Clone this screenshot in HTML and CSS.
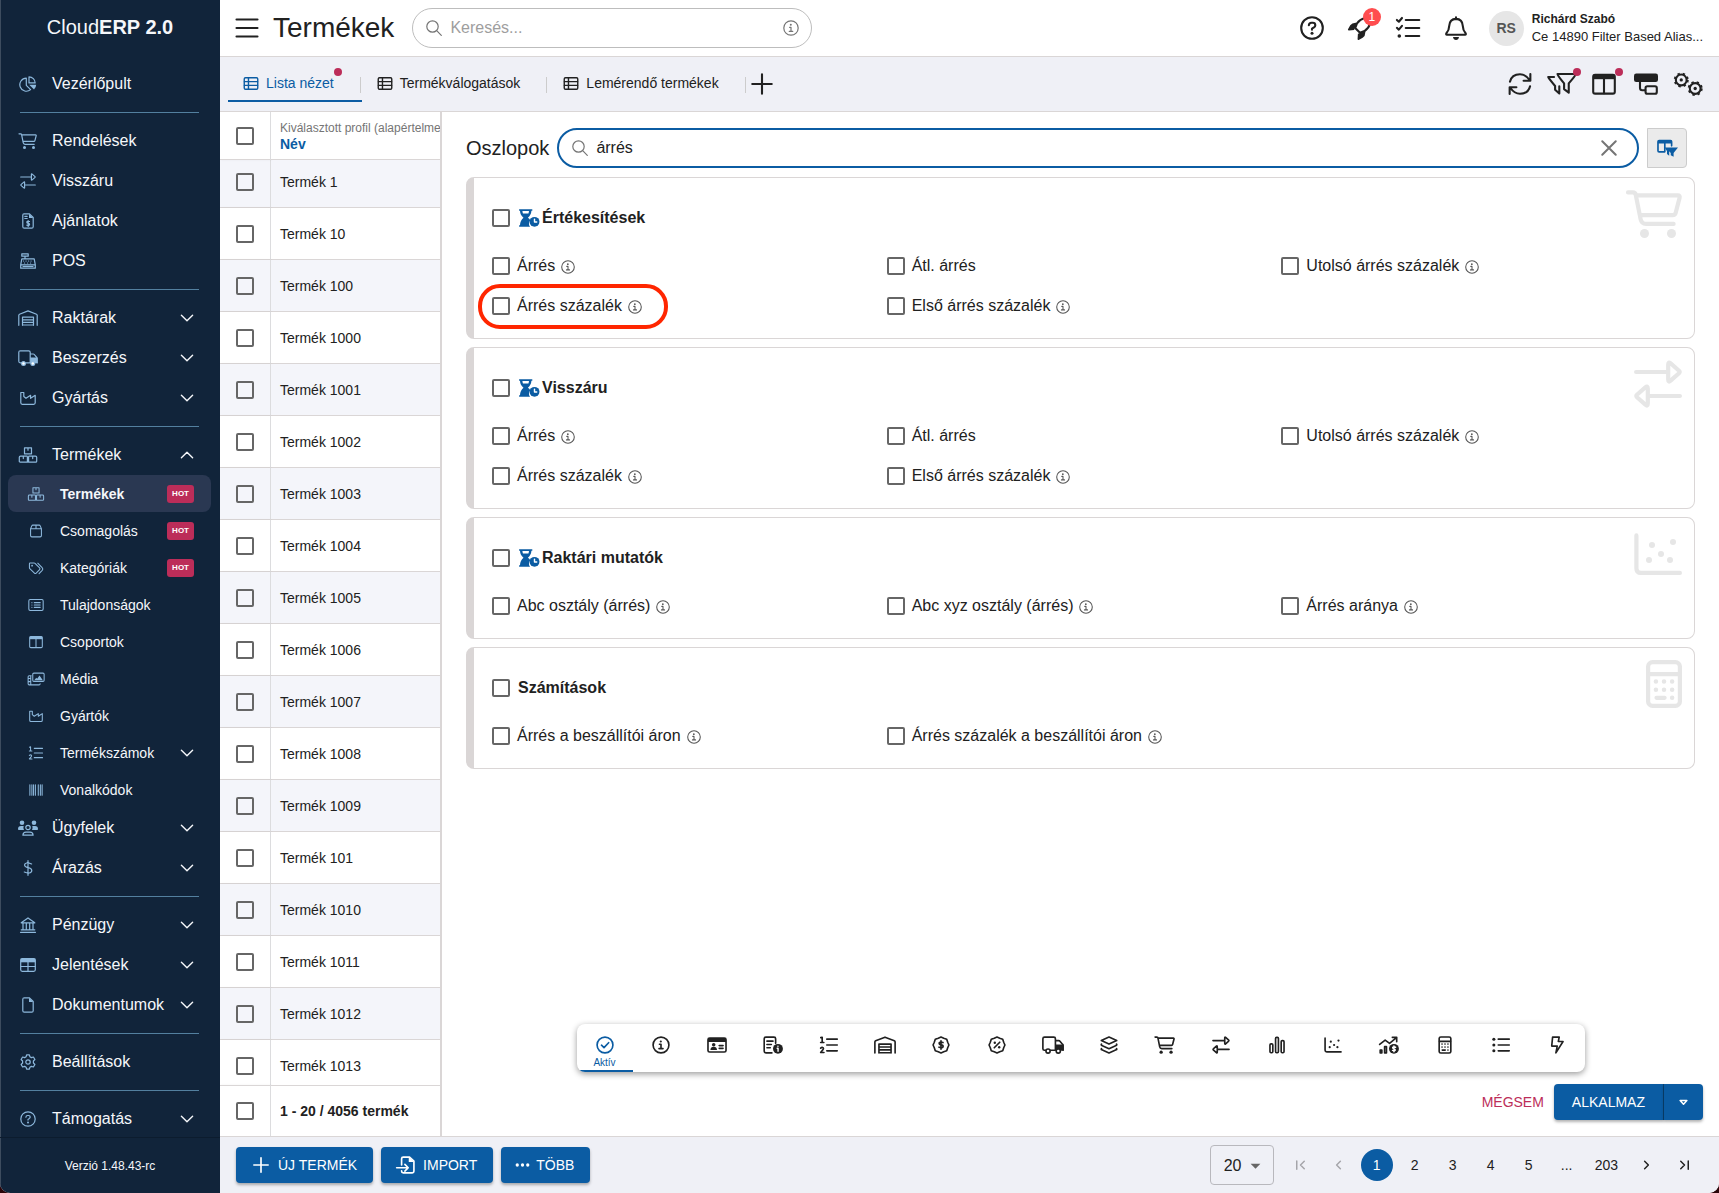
FILE: index.html
```html
<!DOCTYPE html>
<html lang="hu">
<head>
<meta charset="UTF-8">
<meta name="viewport" content="width=device-width,initial-scale=1">
<title>Termékek - CloudERP 2.0</title>
<link rel="stylesheet" href="styles.css">
</head>
<body>

<!-- icon sprite, every symbol sits on a 20x16 grid -->
<svg class="sprite" aria-hidden="true">
  <symbol id="i-pie" viewBox="0 0 20 16"><path d="M8.3 2.2a6.5 6.5 0 1 0 4.3 11.4L8.3 9.3zM11 .8v6.1h6.2A6.2 6.2 0 0 0 11 .8z"/><path class="solid" d="M11.2 8.8h7a7 7 0 0 1-2.2 4.8z"/></symbol>
  <symbol id="i-cart" viewBox="0 0 20 16"><path d="M1 .8h1.6q.9 0 1 .9l1.6 8q.3 1.6 1.8 1.6h9.2M3.8 1.8h13.8q.8 0 .6.8l-1.3 5q-.2.8-1 .8H5"/><circle class="solid" cx="6.5" cy="14.5" r="1.5"/><circle class="solid" cx="15.5" cy="14.5" r="1.5"/></symbol>
  <symbol id="i-swap" viewBox="0 0 20 16"><path d="M2.7 4h10.6M13.4 1.5v5q0 1.1.8.4l2.8-2.5q.4-.4 0-.8L14.2 1.1q-.8-.7-.8.4zM17.3 12H6.7M6.6 9.5v5q0 1.100-.8.4L3 12.400q-.4-.4 0-.8l2.800-2.500q.8-.7.8.4z"/></symbol>
  <symbol id="i-invoice" viewBox="0 0 20 16"><path d="M6 .8h5.500l3.700 3.700v9.200q0 1.500-1.500 1.500H6.300q-1.500 0-1.500-1.500V2.300Q4.800.8 6 .8zM6.800 3.300h2.400M6.800 5.500h2.400M11.500 8.500q-2.700-.6-2.700.8 0 1 1.400 1.100 1.500.2 1.400 1.200-.3 1.300-2.800.6M10.200 7.500v6"/><path class="solid" d="M11 .8v4.200h4.200z"/></symbol>
  <symbol id="i-register" viewBox="0 0 20 16"><path d="M3.800.8h6.400v2.400H3.800zM7 3.200v2.600M3.800 5.800h12.400l1.100 6H2.700zM2.700 11.800h14.600v3.400H2.700zM5.500 8h.1M8 8h.1M10.500 8h.1M13 8h.1M6.500 10h.1M9.500 10h.1M12.500 10h.1M5 13.500h10"/></symbol>
  <symbol id="i-warehouse" viewBox="0 0 20 16"><path d="M.8 15.300V5.300q0-.8.7-1.100L10 .9l8.500 3.300q.7.3.7 1.100v10M4.500 15.300V7.200h11v8.100M4.500 9.800h11M4.500 12.400h11M4.500 15h11"/></symbol>
  <symbol id="i-truck" viewBox="0 0 20 16"><path d="M3.500 12.800H2.300q-1.500 0-1.500-1.500V2.300Q.8.8 2.300.8h8.400q1.500 0 1.500 1.500v10.500H7.800M12.200 4h3q.7 0 1.100.5l2.500 3q.4.4.4 1v4.300"/><path class="solid" d="M12.200 7.500h7.300v5.800h-7.300z"/><circle class="hole" cx="5.500" cy="13.500" r="1.900"/><circle class="hole" cx="14.800" cy="13.500" r="1.900"/></symbol>
  <symbol id="i-industry" viewBox="0 0 20 16"><path d="M2.800 2.500v10.300q0 1.500 1.500 1.500h11.400q1.500 0 1.500-1.500V5.300l-4.600 3V5.300L8 8.300 5.800 6.500V2.500z"/></symbol>
  <symbol id="i-boxes" viewBox="0 0 20 16"><path d="M6.500.8h7v6h-7zM2.500 9.200h6.300q.6 0 .6.800v5.200H2.300q-1 0-1-1V10.200q0-1 1.200-1zM11.200 9.200h6.300q1.200 0 1.200 1v4q0 1-1 1h-7.100V10q0-.8.600-.8zM10 .8v2.400M5.300 9.200v2.400M14.700 9.200v2.400"/></symbol>
  <symbol id="i-package" viewBox="0 0 20 16"><path d="M3.800 5.500v7.700q0 1.500 1.500 1.500h9.400q1.500 0 1.500-1.500V5.500zM3.800 5.500l1.400-3.400q.3-.8 1.200-.8h7.200q.9 0 1.200.8l1.400 3.400M10 1.300v4.200"/></symbol>
  <symbol id="i-tags" viewBox="0 0 20 16"><path d="M2.500 3v4.600q0 .6.400 1l5.300 5.200q1 1 2 0l3.900-3.900q1-1 0-2L8.900 2.700q-.4-.4-1-.4H3.200q-.7 0-.7.700zM12 2.500l5 5q1.600 1.600.1 3.300l-3.600 3.700"/><circle class="solid" cx="5.500" cy="5.300" r="1"/></symbol>
  <symbol id="i-rect-list" viewBox="0 0 20 16"><rect x="1.800" y="1.800" width="16.400" height="12.400" rx="1.500"/><path d="M8 5.300h6.800M8 8h6.800M8 10.700h6.800M5.300 5.300h.1M5.300 8h.1M5.300 10.700h.1"/></symbol>
  <symbol id="i-columns" viewBox="0 0 20 16"><rect x="2.800" y="1.800" width="14.400" height="12.600" rx="1.300"/><path d="M10 4.500v9.700"/><path class="solid" d="M2.800 1.800h14.400v3H2.800z"/></symbol>
  <symbol id="i-media" viewBox="0 0 20 16"><rect x="6.300" y="1.300" width="13" height="9.400" rx="1.300"/><path d="M4.500 4.300H2.200q-1.200 0-1.200 1.200v8q0 1.200 1.200 1.200h11.300q1.200 0 1.200-1.200M4 4.500v10.200M1.500 7.500H4M1.500 11H4"/><path class="solid" d="M8 9.500l2.300-3 1 1.200L14 4l3.800 5.500z"/></symbol>
  <symbol id="i-ol" viewBox="0 0 20 16"><path d="M8 2.700h9.500M8 8h9.500M8 13.300h9.500M2.500 1.300l1.300-.3v4.500M2.400 5.700h2.900M2.400 10.800q1.300-1.200 2.300-.3.700.9-.3 1.900l-2 2.400h3"/></symbol>
  <symbol id="i-barcode" viewBox="0 0 20 16"><path d="M3 2v12M5.300 2v12M7.200 2v12M9.300 2v12M12.600 2v12M15 2v12M17 2v12"/></symbol>
  <symbol id="i-users" viewBox="0 0 20 16"><circle cx="10" cy="7.500" r="2.200"/><path d="M4.900 15.200q.2-3 3-3h4.200q2.800 0 3 3z"/><circle class="solid" cx="4" cy="2.800" r="2.300"/><circle class="solid" cx="16" cy="2.800" r="2.300"/><path class="solid" d="M0 9q0-3 3-3h2.700q-.8 2 .3 4H.8Q0 10 0 9zM20 9q0-3-3-3h-2.700q.8 2-.3 4h5.200q.8 0 .8-1z"/></symbol>
  <symbol id="i-dollar" viewBox="0 0 20 16"><path d="M10 .7v14.600M13.600 4Q10.500 2.800 8.700 3 6.400 3.500 6.600 5.300q.2 1.700 3.400 2.400 3.700.7 3.800 2.800-.1 2.200-2.600 2.500-2 .2-4.900-1"/></symbol>
  <symbol id="i-bank" viewBox="0 0 20 16"><path d="M3.200 5.800L10 .9l6.800 4.900zM5 6v6.500M8.300 6v6.500M11.700 6v6.500M15 6v6.500M3.200 12.800h13.600M2.500 15.300h15"/></symbol>
  <symbol id="i-table" viewBox="0 0 20 16"><rect x="2.700" y="1.700" width="14.600" height="12.600" rx="1.500"/><path d="M10 4v10M3 9.500h14"/><path class="solid" d="M2.700 1.700h14.600v3.600H2.700z"/></symbol>
  <symbol id="i-file" viewBox="0 0 20 16"><path d="M6.300.8h5.200l3.700 3.700v9.200q0 1.500-1.500 1.500H6.300q-1.500 0-1.500-1.500V2.300Q4.800.8 6.300.8z"/><path class="solid" d="M11 .8v4.200h4.200z"/></symbol>
  <symbol id="i-gear" viewBox="0 0 20 16"><path d="M8.600.8h2.800l.5 2 1.500.8 2-.6 1.500 2.500-1.500 1.500v2l1.500 1.500-1.500 2.500-2-.6-1.500.8-.5 2H8.600l-.5-2-1.500-.8-2 .6-1.500-2.500L4.600 9V7L3.100 5.500 4.600 3l2 .6 1.500-.8z"/><circle cx="10" cy="8" r="2.200"/></symbol>
  <symbol id="i-help" viewBox="0 0 20 16"><circle cx="10" cy="8" r="7.200"/><path d="M7.900 6.200Q8 4.500 9.700 4.500h.8q1.700 0 1.700 1.600 0 .9-.9 1.500l-1.300.8v.7"/><circle class="solid" cx="10" cy="11.500" r="1"/></symbol>
  <symbol id="i-info" viewBox="0 0 20 16"><circle cx="10" cy="8" r="7.200"/><path d="M8.600 7.300H10v3.800M8.200 11.300h3.600"/><circle class="solid" cx="9.800" cy="4.800" r="1"/></symbol>
  <symbol id="i-check" viewBox="0 0 20 16"><circle cx="10" cy="8" r="7.200"/><path d="M6.800 8.200l2.300 2.200 4.200-4.500"/></symbol>
  <symbol id="i-down" viewBox="0 0 20 16"><path d="M2 4l8 8 8-8"/></symbol>
  <symbol id="i-up" viewBox="0 0 20 16"><path d="M2 12l8-8 8 8"/></symbol>
  <symbol id="i-search" viewBox="0 0 20 16"><circle cx="8.500" cy="6.500" r="5.700"/><path d="M12.700 10.700l4.600 4.600"/></symbol>
  <symbol id="i-x" viewBox="0 0 20 16"><path d="M4 2l12 12M16 2L4 14"/></symbol>
  <symbol id="i-menu" viewBox="0 0 20 16"><path d="M3 2.300h14M3 8h14M3 13.700h14"/></symbol>
  <symbol id="i-plus" viewBox="0 0 20 16"><path d="M3.500 8h13M10 1.500v13"/></symbol>
  <symbol id="i-rocket" viewBox="0 0 20 16"><path d="M6.800 8Q8.500.8 17.300.8 17.300 9.300 10 11.200z"/><path class="solid" d="M7.800 4.500q-3-.3-4.300 1.700L2 8.900q-.2.700.6.700l3.500-.2zM13.500 10.200q.3 3-1.700 4.300l-2.700 1.500q-.7.200-.7-.6l.2-3.500z"/></symbol>
  <symbol id="i-tasks" viewBox="0 0 20 16"><path d="M8.500 2.700h9M8.500 8h9M8.500 13.300h9M2.600 2.600l1.300 1.200L6 1.300M2.600 7.900l1.300 1.200L6 6.600"/><circle class="solid" cx="4.200" cy="13.300" r="1.200"/></symbol>
  <symbol id="i-bell" viewBox="0 0 20 16"><path d="M10 .8v1M10 1.900q4.300.2 4.500 4.600.1 3 1.900 5 .5.900-.4 1H4q-.9-.1-.4-1 1.800-2 1.900-5Q5.700 2.100 10 1.900z"/><path class="solid" d="M8 14h4q-.3 2-2 2t-2-2z"/></symbol>
  <symbol id="i-view" viewBox="0 0 20 16"><rect x="2.800" y="1.800" width="14.400" height="12.400" rx="1.300"/><path d="M3 6h14M3 10h14M7.300 2v12"/></symbol>
  <symbol id="i-sync" viewBox="0 0 20 16"><path d="M3.300 6.500Q4.500 1.500 10 1.500q3.700 0 6.500 4M16.900 1.300v4.500h-4.500M16.700 9.500q-1.200 5-6.700 5-3.700 0-6.500-4M3.100 14.700v-4.500h4.500"/></symbol>
  <symbol id="i-filters" viewBox="0 0 20 16"><path d="M7 1.300h12.300q-.3 1-4.800 6.300v6.200l-3.100-2.400V7.600Q7 2.300 7 1.300zM4.700 3.300H.8q.5 1.300 4.600 6v2.500l2.800 2.500V9.500"/></symbol>
  <symbol id="i-tree" viewBox="0 0 20 16"><rect class="solid" x="2" y="1" width="16" height="5.600" rx="1.500"/><path d="M6 6v4.500q0 1.700 1.500 1.700h2"/><rect x="9.700" y="9.500" width="7.500" height="5" rx="1.200"/></symbol>
  <symbol id="i-gears" viewBox="0 0 20 16"><circle cx="5.500" cy="5.300" r="3.600"/><circle class="teeth" cx="5.500" cy="5.300" r="4.400"/><circle class="solid" cx="5.500" cy="5.300" r="1.100"/><circle cx="14.800" cy="11" r="3.600"/><circle class="teeth" cx="14.800" cy="11" r="4.400"/><circle class="solid" cx="14.800" cy="11" r="1.100"/></symbol>
  <symbol id="i-colfilter" viewBox="0 0 20 16"><path d="M8 11.500H2.800q-1 0-1-1V2.300q0-1 1-1h10.400q1 0 1 1V6M8 3.500v8"/><path class="solid" d="M1.800 1.300h12.400v2.500H1.800zM8 7.500h12l-4 5V16l-2.600-1.500v-2L12 11v4l-2-1.500v-2.500z"/></symbol>
  <symbol id="i-hourglass" viewBox="0 0 20 16"><path class="solid" d="M1 0h12v1.500h-.8Q12 5.300 9 7.800q1.300.8 2.200 2.200-1.500 1.600-1.200 3.600.2 1.300 1 2.400H1v-1.500h.8Q2 10.300 5 7.800 2 5.500 1.800 1.500H1z"/><path class="gap" d="M4 1.700h6q-.1 1.300-.5 2.200h-5Q4.100 3 4 1.700z"/><circle class="solid" cx="15" cy="11.500" r="4.500"/><path class="tick" d="M15 9v2.700h2"/></symbol>
  <symbol id="i-card" viewBox="0 0 20 16"><rect x="1.800" y="1.800" width="16.400" height="12.600" rx="1.500"/><path class="solid" d="M1.800 1.800h16.400v3.500H1.800zM4 12.500q.2-2.800 3-2.800t3 2.800z"/><circle class="solid" cx="7" cy="7.700" r="1.600"/><path d="M12 8.500h3.500M12 11h3.500"/></symbol>
  <symbol id="i-fileinfo" viewBox="0 0 20 16"><path d="M9 15.200H3.500q-1.500 0-1.500-1.500V2.300Q2 .8 3.500.8h7.400q1.500 0 1.500 1.500V6.500M4.500 4.500H10M4.500 7.500h4M4.500 10.500h3"/><circle class="solid" cx="14.500" cy="11.500" r="4.500"/><path class="tick" d="M14.500 9v.2M13.800 11h.8v2.700"/></symbol>
  <symbol id="i-sealdollar" viewBox="0 0 20 16"><path d="M10 .8l2.500 1.100 2.700.9.900 2.700L17.200 8l-1.100 2.500-.9 2.700-2.700.9-2.500 1.100-2.500-1.100-2.700-.9-.9-2.700L2.800 8l1.100-2.500.9-2.700 2.700-.9zM11.800 5.800q-3.500-1-3.500.6 0 1.200 1.800 1.500 1.900.3 1.800 1.500-.3 1.600-3.700.6M10 4.200v7.600"/></symbol>
  <symbol id="i-sealpct" viewBox="0 0 20 16"><path d="M10 .8l2.500 1.100 2.700.9.900 2.700L17.200 8l-1.100 2.500-.9 2.700-2.700.9-2.500 1.100-2.500-1.100-2.700-.9-.9-2.700L2.800 8l1.100-2.500.9-2.700 2.700-.9zM12.500 5.500l-5 5"/><circle class="solid" cx="8" cy="6" r="1.100"/><circle class="solid" cx="12" cy="10" r="1.100"/></symbol>
  <symbol id="i-layers" viewBox="0 0 20 16"><path d="M10 .8l7 3.200-7 3.200L3 4zM3.200 7.200Q2.500 8 3.500 8.400L10 11.300l6.500-2.900q1-.4.300-1.200M3.200 11.200q-.7.800.3 1.200l6.500 2.900 6.500-2.900q1-.4.3-1.200"/></symbol>
  <symbol id="i-bars" viewBox="0 0 20 16"><rect x="3.600" y="7" width="2.600" height="8" rx="1"/><rect x="8.700" y="1" width="2.600" height="14" rx="1"/><rect x="13.800" y="4" width="2.600" height="11" rx="1"/></symbol>
  <symbol id="i-scatter" viewBox="0 0 20 16"><path d="M2.800 1.800v11q0 1.500 1.500 1.500h13"/><circle class="solid" cx="8" cy="5" r="1"/><circle class="solid" cx="15" cy="4" r="1"/><circle class="solid" cx="11" cy="8" r="1"/><circle class="solid" cx="7" cy="10" r="1"/><circle class="solid" cx="14" cy="10" r="1"/></symbol>
  <symbol id="i-growth" viewBox="0 0 20 16"><path d="M1.500 7.500l5-4 4 3 6-5M13 1h4v4M2 12.500h1.500v2.700H2zM6 9.500h1.700v5.700H6z"/><circle class="solid" cx="14.500" cy="11.500" r="4.500"/><path class="tick" d="M16 10q-2.700-.8-2.700.3 0 .9 1.200 1.100 1.300.2 1.200 1.200-.2 1-2.500.3M14.500 8.800v5.400"/></symbol>
  <symbol id="i-calc" viewBox="0 0 20 16"><rect x="4.700" y=".7" width="10.600" height="14.600" rx="1.500"/><path d="M5 4.700h10M7.500 12.600h2.700"/><path class="dots" d="M7.300 7.200h.01M10 7.200h.01M12.700 7.200h.01M7.300 9.900h.01M10 9.900h.01M12.700 9.900h.01M12.700 12.600h.01"/></symbol>
  <symbol id="i-list" viewBox="0 0 20 16"><path d="M7.500 2.700h10M7.500 8h10M7.500 13.300h10"/><circle class="solid" cx="3.500" cy="2.700" r="1.400"/><circle class="solid" cx="3.500" cy="8" r="1.400"/><circle class="solid" cx="3.500" cy="13.300" r="1.400"/></symbol>
  <symbol id="i-bolt" viewBox="0 0 20 16"><path d="M6 .8h6l-.8 4h4.300L9 15.200 10.200 9H5.200z"/></symbol>
  <symbol id="i-import" viewBox="0 0 20 16"><path d="M6 8V2.300Q6 .8 7.500.8h5.700L17.200 4.500v9.200q0 1.500-1.500 1.500H7.500Q6 15.200 6 13.700v-.5M1.500 10.500h10M9 7.500l3 3-3 3"/><path class="solid" d="M12.500.8v4.500h4.700z"/></symbol>
  <symbol id="i-dots" viewBox="0 0 20 16"><circle class="solid" cx="3" cy="8" r="2.200"/><circle class="solid" cx="10" cy="8" r="2.200"/><circle class="solid" cx="17" cy="8" r="2.200"/></symbol>
  <symbol id="i-caret" viewBox="0 0 20 16"><path d="M5.500 6h9L10 11z"/></symbol>
  <symbol id="i-tri" viewBox="0 0 20 16"><path class="solid" d="M3.500 5h13L10 11.500z"/></symbol>
  <symbol id="i-first" viewBox="0 0 20 16"><path d="M5 2.500v11M15 3l-5 5 5 5"/></symbol>
  <symbol id="i-prev" viewBox="0 0 20 16"><path d="M12.500 3l-5 5 5 5"/></symbol>
  <symbol id="i-next" viewBox="0 0 20 16"><path d="M7.500 3l5 5-5 5"/></symbol>
  <symbol id="i-last" viewBox="0 0 20 16"><path d="M15 2.500v11M5 3l5 5-5 5"/></symbol>
</svg>

<div class="app">
  <aside class="sidebar">
    <div class="logo">Cloud<b>ERP 2.0</b></div>
    <nav class="nav">
      <a class="item" href="#"><svg class="ic"><use href="#i-pie"/></svg>Vezérlőpult</a>
      <hr>
      <a class="item" href="#"><svg class="ic"><use href="#i-cart"/></svg>Rendelések</a>
      <a class="item" href="#"><svg class="ic"><use href="#i-swap"/></svg>Visszáru</a>
      <a class="item" href="#"><svg class="ic"><use href="#i-invoice"/></svg>Ajánlatok</a>
      <a class="item" href="#"><svg class="ic"><use href="#i-register"/></svg>POS</a>
      <hr>
      <button class="item"><svg class="ic"><use href="#i-warehouse"/></svg>Raktárak<svg class="ic chev"><use href="#i-down"/></svg></button>
      <button class="item"><svg class="ic"><use href="#i-truck"/></svg>Beszerzés<svg class="ic chev"><use href="#i-down"/></svg></button>
      <button class="item"><svg class="ic"><use href="#i-industry"/></svg>Gyártás<svg class="ic chev"><use href="#i-down"/></svg></button>
      <hr>
      <button class="item"><svg class="ic"><use href="#i-boxes"/></svg>Termékek<svg class="ic chev"><use href="#i-up"/></svg></button>
      <a class="item sub active" href="#"><svg class="ic"><use href="#i-boxes"/></svg>Termékek<span class="hot">HOT</span></a>
      <a class="item sub" href="#"><svg class="ic"><use href="#i-package"/></svg>Csomagolás<span class="hot">HOT</span></a>
      <a class="item sub" href="#"><svg class="ic"><use href="#i-tags"/></svg>Kategóriák<span class="hot">HOT</span></a>
      <a class="item sub" href="#"><svg class="ic"><use href="#i-rect-list"/></svg>Tulajdonságok</a>
      <a class="item sub" href="#"><svg class="ic"><use href="#i-columns"/></svg>Csoportok</a>
      <a class="item sub" href="#"><svg class="ic"><use href="#i-media"/></svg>Média</a>
      <a class="item sub" href="#"><svg class="ic"><use href="#i-industry"/></svg>Gyártók</a>
      <button class="item sub"><svg class="ic"><use href="#i-ol"/></svg>Termékszámok<svg class="ic chev"><use href="#i-down"/></svg></button>
      <a class="item sub" href="#"><svg class="ic"><use href="#i-barcode"/></svg>Vonalkódok</a>
      <button class="item"><svg class="ic"><use href="#i-users"/></svg>Ügyfelek<svg class="ic chev"><use href="#i-down"/></svg></button>
      <button class="item"><svg class="ic"><use href="#i-dollar"/></svg>Árazás<svg class="ic chev"><use href="#i-down"/></svg></button>
      <hr>
      <button class="item"><svg class="ic"><use href="#i-bank"/></svg>Pénzügy<svg class="ic chev"><use href="#i-down"/></svg></button>
      <button class="item"><svg class="ic"><use href="#i-table"/></svg>Jelentések<svg class="ic chev"><use href="#i-down"/></svg></button>
      <button class="item"><svg class="ic"><use href="#i-file"/></svg>Dokumentumok<svg class="ic chev"><use href="#i-down"/></svg></button>
      <hr>
      <a class="item" href="#"><svg class="ic"><use href="#i-gear"/></svg>Beállítások</a>
      <hr>
      <button class="item"><svg class="ic"><use href="#i-help"/></svg>Támogatás<svg class="ic chev"><use href="#i-down"/></svg></button>
    </nav>
    <div class="version">Verzió 1.48.43-rc</div>
  </aside>

  <div class="page">
    <header class="topbar">
      <button class="icon-btn" aria-label="Menü"><svg class="ic l"><use href="#i-menu"/></svg></button>
      <h1>Termékek</h1>
      <div class="search">
        <svg class="ic"><use href="#i-search"/></svg>
        <input type="text" placeholder="Keresés..." aria-label="Keresés">
        <button class="icon-btn" aria-label="Információ"><svg class="ic"><use href="#i-info"/></svg></button>
      </div>
      <div class="actions">
        <button class="icon-btn" aria-label="Súgó"><svg class="ic l"><use href="#i-help"/></svg></button>
        <button class="icon-btn" aria-label="Újdonságok"><svg class="ic l"><use href="#i-rocket"/></svg><span class="count">1</span></button>
        <button class="icon-btn" aria-label="Feladatok"><svg class="ic l"><use href="#i-tasks"/></svg></button>
        <button class="icon-btn" aria-label="Értesítések"><svg class="ic l"><use href="#i-bell"/></svg></button>
      </div>
      <div class="user">
        <span class="avatar">RS</span>
        <div><b>Richárd Szabó</b><span>Ce 14890 Filter Based Alias...</span></div>
      </div>
    </header>

    <div class="tabbar">
      <div class="tabs">
        <button class="tab active"><svg class="ic"><use href="#i-view"/></svg>Lista nézet<i class="dot"></i></button>
        <button class="tab"><svg class="ic"><use href="#i-view"/></svg>Termékválogatások</button>
        <button class="tab"><svg class="ic"><use href="#i-view"/></svg>Lemérendő termékek</button>
        <button class="icon-btn" aria-label="Új nézet"><svg class="ic l"><use href="#i-plus"/></svg></button>
      </div>
      <div class="tools">
        <button class="icon-btn" aria-label="Frissítés"><svg class="ic l"><use href="#i-sync"/></svg></button>
        <button class="icon-btn" aria-label="Szűrők"><svg class="ic l"><use href="#i-filters"/></svg><i class="dot"></i></button>
        <button class="icon-btn" aria-label="Oszlopok"><svg class="ic l"><use href="#i-columns"/></svg><i class="dot"></i></button>
        <button class="icon-btn" aria-label="Csoportosítás"><svg class="ic l"><use href="#i-tree"/></svg></button>
        <button class="icon-btn" aria-label="Beállítások"><svg class="ic l"><use href="#i-gears"/></svg></button>
      </div>
    </div>

    <main class="content">
      <div class="list" id="list">
        <table>
          <thead><tr>
            <th class="pick"><input type="checkbox" aria-label="Összes kijelölése"></th>
            <th><small>Kiválasztott profil (alapértelmezett)</small><a href="#">Név</a></th>
          </tr></thead>
          <tbody id="rows"></tbody>
          <tfoot><tr>
            <td class="pick"><input type="checkbox" aria-label="Oldal kijelölése"></td>
            <td>1 - 20 / 4056 termék</td>
          </tr></tfoot>
        </table>
      </div>

      <section class="panel">
        <div class="panel-head">
          <h2><label for="colSearch">Oszlopok</label></h2>
          <div class="search focus">
            <svg class="ic"><use href="#i-search"/></svg>
            <input type="text" id="colSearch" value="árrés" autofocus>
            <button class="icon-btn" aria-label="Törlés"><svg class="ic clear"><use href="#i-x"/></svg></button>
          </div>
          <button class="only" aria-label="Csak a szűrt oszlopok"><svg class="ic m"><use href="#i-colfilter"/></svg></button>
        </div>
        <div class="groups" id="groups"></div>
        <div class="tray" id="tray"></div>
        <div class="panel-foot">
          <button class="cancel">MÉGSEM</button>
          <div class="split">
            <button class="btn">ALKALMAZ</button>
            <button class="btn" aria-label="További lehetőségek"><svg class="ic s"><use href="#i-caret"/></svg></button>
          </div>
        </div>
      </section>
    </main>

    <footer class="bottombar">
      <button class="btn"><svg class="ic m"><use href="#i-plus"/></svg>ÚJ TERMÉK</button>
      <button class="btn"><svg class="ic m"><use href="#i-import"/></svg>IMPORT</button>
      <button class="btn"><svg class="ic s"><use href="#i-dots"/></svg>TÖBB</button>
      <div class="pager">
        <div class="size">
          <select aria-label="Sorok száma"><option>20</option></select>
          <svg class="ic s"><use href="#i-tri"/></svg>
        </div>
        <button disabled aria-label="Első"><svg class="ic s"><use href="#i-first"/></svg></button>
        <button disabled aria-label="Előző"><svg class="ic s"><use href="#i-prev"/></svg></button>
        <button class="current">1</button>
        <button>2</button>
        <button>3</button>
        <button>4</button>
        <button>5</button>
        <span>...</span>
        <button>203</button>
        <button aria-label="Következő"><svg class="ic s"><use href="#i-next"/></svg></button>
        <button aria-label="Utolsó"><svg class="ic s"><use href="#i-last"/></svg></button>
      </div>
    </footer>
  </div>
</div>

<script>
/* ------------ data ------------ */
const products=[1,10,100,1000,1001,1002,1003,1004,1005,1006,1007,1008,1009,101,1010,1011,1012,1013];
const margins=[
  {name:"Árrés",info:true},{name:"Átl. árrés"},{name:"Utolsó árrés százalék",info:true},
  {name:"Árrés százalék",info:true},{name:"Első árrés százalék",info:true}
];
const groups=[
  {title:"Értékesítések",icon:"cart",size:"wide",timed:true,marked:3,cols:margins},
  {title:"Visszáru",icon:"swap",timed:true,cols:margins},
  {title:"Raktári mutatók",icon:"scatter",timed:true,cols:[
    {name:"Abc osztály (árrés)",info:true},{name:"Abc xyz osztály (árrés)",info:true},{name:"Árrés aránya",info:true}]},
  {title:"Számítások",icon:"calc",size:"narrow",cols:[
    {name:"Árrés a beszállítói áron",info:true},{name:"Árrés százalék a beszállítói áron",info:true}]}
];
const shortcuts=["check","info","card","fileinfo","ol","warehouse","sealdollar","sealpct","truck","layers","cart","swap","bars","scatter","growth","calc","list","bolt"];

const ic=(name,cls='')=>`<svg class="ic ${cls}"><use href="#i-${name}"/></svg>`;

/* ------------ product rows ------------ */
document.getElementById('rows').innerHTML=products.map(n=>
  `<tr><td class="pick"><input type="checkbox" id="p${n}"></td><td><label for="p${n}">Termék ${n}</label></td></tr>`
).join('');
document.getElementById('list').scrollTop=4;

/* ------------ column groups ------------ */
document.getElementById('groups').innerHTML=groups.map(g=>`
  <div class="group">
    ${ic(g.icon,'mark '+(g.size||''))}
    <label class="title"><input type="checkbox">${g.timed?ic('hourglass','m'):''}<span>${g.title}</span></label>
    <div class="cols">${g.cols.map((c,i)=>
      `<div><label class="${i===g.marked?'ring':''}"><input type="checkbox"><span>${c.name}</span>${c.info?ic('info','tip'):''}</label></div>`
    ).join('')}</div>
  </div>`).join('');

/* ------------ shortcut tray ------------ */
document.getElementById('tray').innerHTML=shortcuts.map((s,i)=>
  `<button class="${i?'':'active'}" aria-label="${s}">${ic(s,'m')}${i?'':'<span>Aktív</span>'}</button>`
).join('');
</script>
</body>
</html>
```

FILE: styles.css
```css
:root{
  --blue:#0b5ca3;
  --navy:#11243a;
  --pink:#bc2d59;
  --bar:#eff0f6;
  --line:#dad6d6;
  --text:#212121;
  --grey:#666;
  font-family:Helvetica,"Liberation Sans",Arial,sans-serif;
}
*{box-sizing:border-box;margin:0;padding:0}
body{background:#2b0409;color:var(--text);font-size:16px}
button,input,select{font:inherit;color:inherit;border:none;background:none}
button{cursor:pointer}
a{color:inherit;text-decoration:none}

/* ── icons ── */
.sprite{position:absolute;width:0;height:0}
.ic{width:20px;height:16px;flex:none;fill:none;stroke:currentColor;stroke-width:1.5;stroke-linecap:round;stroke-linejoin:round}
.ic.s{width:15px;height:12px;stroke-width:2}
.ic.m{width:22px;height:18px}
.ic.l{width:30px;height:24px;stroke-width:1.4}
.solid{fill:currentColor;stroke:none}
.hole{fill:#fff}
.gap{fill:#fff;stroke:none}
.tick{stroke:#fff;stroke-width:1.3}
.teeth{stroke-width:1.2;stroke-dasharray:1.6 2;stroke-linecap:butt}
.dots{stroke-width:1.5}

input[type=checkbox]{appearance:none;width:18px;height:18px;flex:none;border:2px solid var(--grey);border-radius:2px;display:block;cursor:pointer}
input[type=checkbox]:checked{background:var(--blue);border-color:var(--blue)}

.app{display:flex;height:100vh;border-radius:0 0 10px 10px;overflow:hidden;background:#fff}

/* ── sidebar ── */
.sidebar{width:220px;flex:none;background:var(--navy);color:#f5f7fa;display:flex;flex-direction:column;box-shadow:inset 1px 0 #3d4c5e}
.logo{height:64px;flex:none;padding-top:14px;text-align:center;font-size:20px;line-height:26px}
.nav{flex:1;min-height:0;overflow:hidden}
.nav hr{border:none;border-top:1px solid #53809f;margin:8px 21px 8px 20px}
.item{display:flex;align-items:center;gap:12px;width:100%;height:40px;padding:0 26px 0 16px;text-align:left}
.item .ic{width:24px;color:#8db8dc;stroke-width:1.2}
.item .hole{fill:var(--navy)}
.item .chev{width:14px;height:16px;margin-left:auto;color:#f5f7fa;stroke-width:2}
.item.sub{width:auto;height:37px;margin:0 9px 0 8px;padding:0 17px 0 16px;font-size:14px;border-radius:8px}
.item.sub .ic{height:14px}
button.item.sub{width:calc(100% - 17px)}
.item.active{background:#2a3852;font-weight:700}
.hot{margin-left:auto;padding:0 5px;border-radius:3px;background:var(--pink);color:#fff;font-size:8px;line-height:18px;font-weight:700}
.version{height:56px;flex:none;border-top:1px solid #0c1c2e;display:flex;align-items:center;justify-content:center;font-size:12px}

.page{flex:1;min-width:0;display:flex;flex-direction:column}

/* ── top bar ── */
.topbar{height:57px;flex:none;display:flex;align-items:center;padding:0 16px 0 12px;border-bottom:1px solid var(--line)}
.icon-btn{position:relative;display:flex;align-items:center;justify-content:center}
h1{font-size:28px;font-weight:400;margin:0 18px 0 11px}
.search{display:flex;align-items:center;height:40px;width:400px;border:1px solid #bdbdbd;border-radius:20px;padding:0 10px 0 11px;color:#757575}
.search input{flex:1;min-width:0;padding:0 6px;outline:none;color:var(--text)}
.search input::placeholder{color:#9e9e9e}
.search .ic{stroke-width:1.2}
.search .clear{width:24px;height:18px;stroke-width:1.8}
.actions{display:flex;gap:18px;margin-left:auto}
.count{position:absolute;left:18px;top:-8px;width:18px;height:18px;border-radius:50%;background:#ff4d4f;color:#fff;font-size:12px;line-height:18px}
.user{display:flex;align-items:center;gap:8px;margin-left:18px;font-size:13px;line-height:17px}
.user b,.user div span{display:block}
.user b{font-size:12px}
.avatar{width:35px;height:35px;border-radius:50%;background:#e6e6e6;color:#555;font-size:14px;font-weight:700;line-height:35px;text-align:center}

/* ── view tabs ── */
.tabbar{height:55px;flex:none;background:var(--bar);border-bottom:1px solid var(--line);display:flex;justify-content:space-between;padding:0 16px 0 8px}
.tabs,.tools{display:flex;align-items:center}
.tab{position:relative;display:flex;align-items:center;gap:5px;height:36px;padding:0 28px 0 13px;font-size:14px;border-bottom:2px solid transparent}
.tab::after{content:"";position:absolute;right:1px;top:11px;height:16px;border-right:1px solid #ccc}
.tab .ic{height:15px}
.tab.active{color:var(--blue);border-color:var(--blue)}
.dot{position:absolute;right:20px;top:2px;width:8px;height:8px;border-radius:50%;background:var(--pink)}
.tools{gap:12px}
.tools .dot{right:-4px;top:-4px}

/* ── product list ── */
.content{flex:1;min-height:0;display:flex}
.list{width:222px;flex:none;overflow:auto;scrollbar-width:none;border-right:2px solid var(--line)}
table{width:100%;table-layout:fixed;border-collapse:separate;border-spacing:0;font-size:14px}
th,td{height:52px;padding:0 0 0 9px;text-align:left;border-bottom:1px solid var(--line);background:#fff;overflow:hidden;white-space:nowrap}
.pick{width:51px;padding-left:16px;border-right:1px solid #dcdcde;box-shadow:1px 0 2px rgba(0,0,0,.06)}
tbody tr:nth-child(odd) td{background:#f4f5fa}
thead th{position:sticky;top:0;height:48px;z-index:2}
thead small{display:block;font-size:12px;line-height:16px;font-weight:400;color:#757575}
thead a{display:block;line-height:16px;color:var(--blue)}
tfoot td{position:sticky;bottom:0;height:51px;border-top:1px solid var(--line);border-bottom:none;font-weight:700}

/* ── column panel ── */
.panel{flex:1;min-width:0;display:flex;flex-direction:column;padding:16px 16px 16px 24px}
.panel-head{display:flex;align-items:center;gap:8px;margin-right:16px}
h2{font-size:20px;font-weight:400}
.search.focus{flex:1;border:2px solid var(--blue);padding-right:16px}
.only{width:40px;height:40px;display:flex;align-items:center;justify-content:center;background:#ebebeb;border:1px solid #ccc;border-radius:0 4px 4px 0;color:var(--blue)}
.groups{flex:1;min-height:0;margin:9px 8px 0 0;display:flex;flex-direction:column;gap:8px}
.group{position:relative;border:1px solid var(--line);border-left-width:8px;border-radius:8px;padding:20px 18px 12px}
.ic.mark{position:absolute;right:6px;top:12px;width:60px;height:48px;color:#e6e6e6;stroke-width:1.4}
.ic.mark.wide{right:9px}
.ic.mark.narrow{right:0}
.title{display:flex;align-items:center;height:40px;gap:8px;margin-bottom:8px;font-weight:700}
.title .ic{color:var(--blue)}
.title .ic + span{margin-left:-6px}
.cols{display:grid;grid-template-columns:repeat(3,1fr)}
.cols label{position:relative;display:inline-flex;align-items:center;gap:7px;height:40px}
.ic.tip{width:18px;height:14px;margin:2px 0 0 -3px;color:#555;stroke-width:1.2}
.ring::after{content:"";position:absolute;inset:-2px -24px -3px -14px;border:4px solid #ff2600;border-radius:22px;pointer-events:none}
.tray{align-self:center;display:flex;height:48px;margin-right:8px;border-radius:8px;overflow:hidden;box-shadow:0 2px 6px rgba(0,0,0,.4);background:#fff}
.tray button{width:56px;display:flex;flex-direction:column;align-items:center;padding-top:12px}
.tray .active{color:var(--blue);border-bottom:2px solid var(--blue)}
.tray span{font-size:10px;line-height:18px}
.panel-foot{display:flex;justify-content:flex-end;align-items:center;gap:10px;margin-top:12px}
.cancel{font-size:14px;color:var(--pink)}
.btn{display:flex;align-items:center;gap:6px;height:36px;padding:0 16px 0 14px;border-radius:4px;background:var(--blue);color:#fff;font-size:14px;box-shadow:0 2px 3px rgba(0,0,0,.3)}
.split{display:flex}
.split .btn:first-child{padding:0 18px;border-radius:4px 0 0 4px;border-right:1px solid #08406f}
.split .btn:last-child{padding:0 12px;border-radius:0 4px 4px 0}

/* ── bottom bar ── */
.bottombar{height:57px;flex:none;background:var(--bar);border-top:1px solid var(--line);display:flex;align-items:center;gap:8px;padding:0 16px}
.pager{margin-left:auto;display:flex;align-items:center;font-size:14px}
.pager button,.pager span{display:flex;align-items:center;justify-content:center;min-width:32px;height:32px;margin:0 3px;padding:0 6px;border-radius:16px}
.pager button:disabled{color:#a5a5aa}
.pager .current{background:var(--blue);color:#fff}
.size{position:relative;margin-right:8px}
.size select{appearance:none;width:64px;height:40px;padding-left:13px;border:1px solid #b8b8bd;border-radius:4px;font-size:16px}
.size .ic{position:absolute;right:11px;top:15px;color:var(--grey);pointer-events:none}
```
